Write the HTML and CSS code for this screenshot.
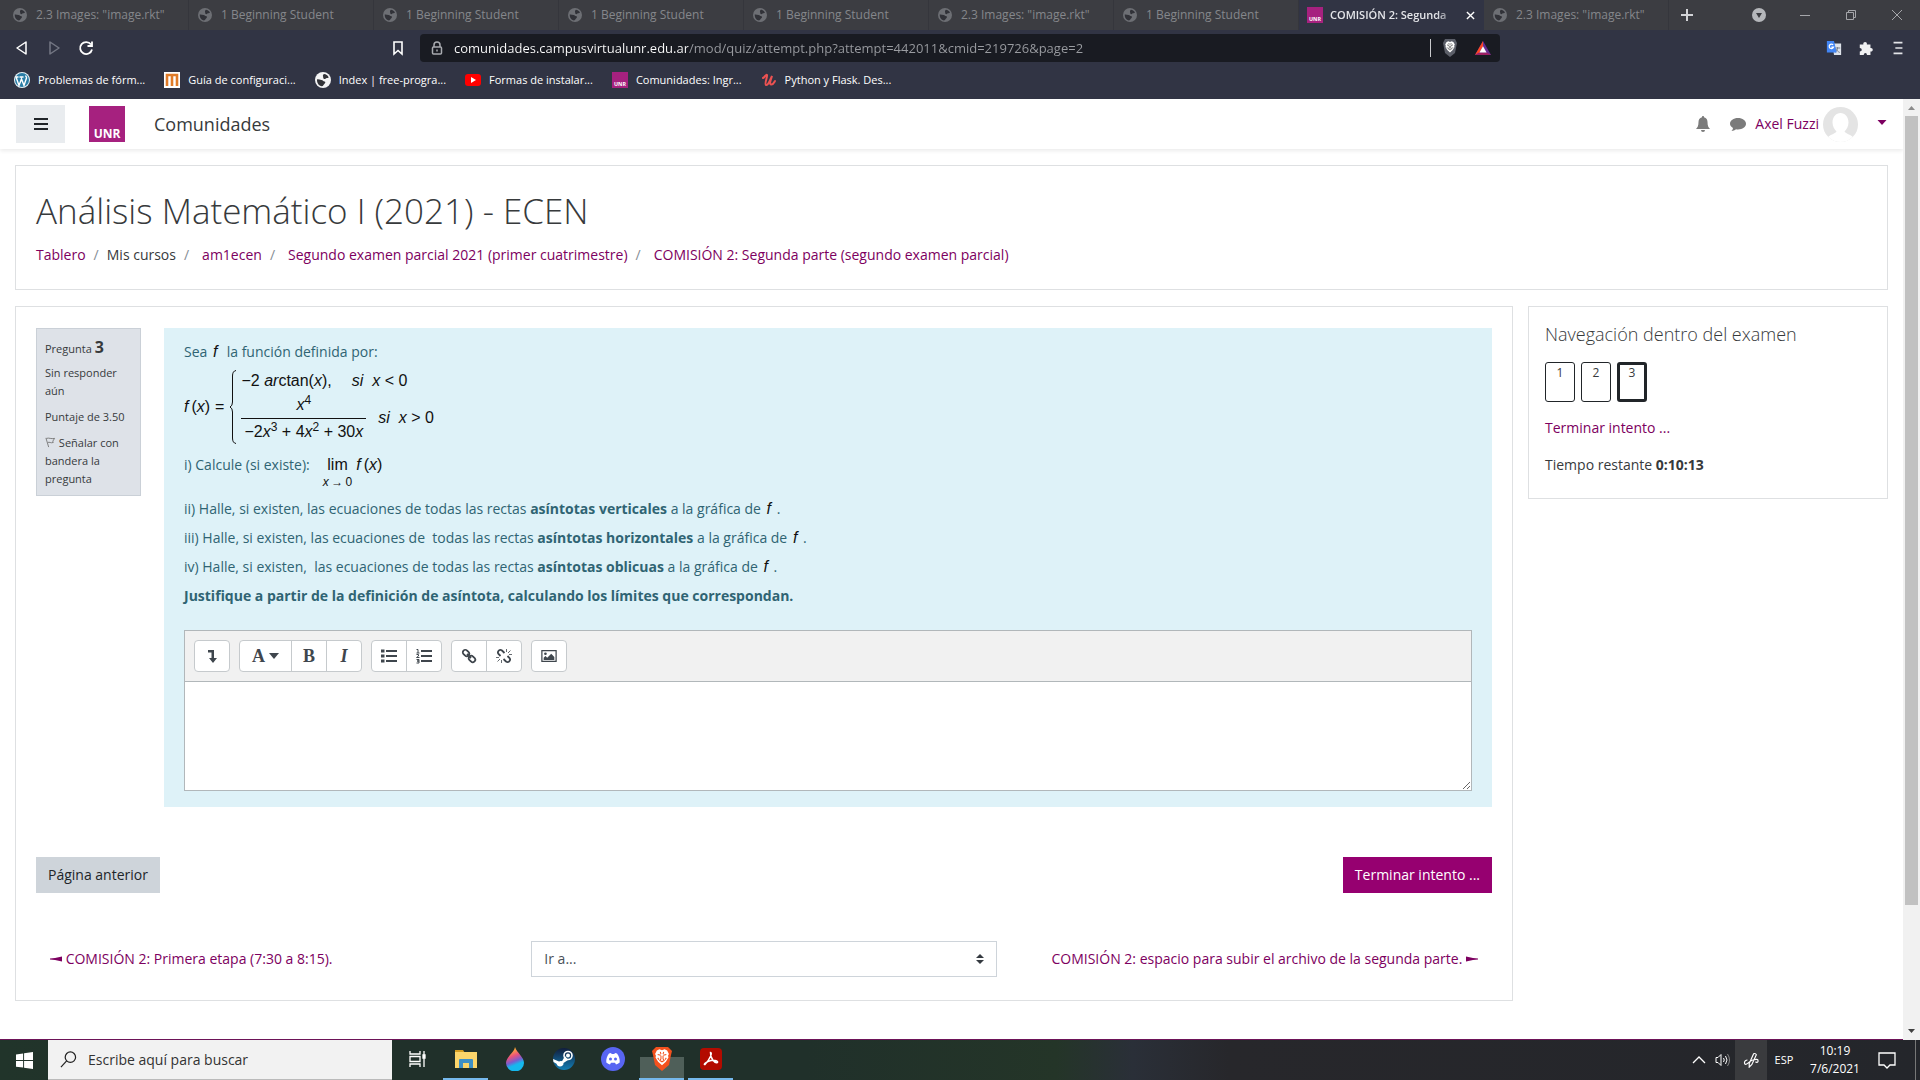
FILE: index.html
```html
<!DOCTYPE html>
<html lang="es">
<head>
<meta charset="utf-8">
<meta name="viewport" content="width=device-width, initial-scale=1">
<title>COMISIÓN 2: Segunda parte (segundo examen parcial)</title>
<link rel="stylesheet" href="styles.css">
</head>
<body>
<svg class="defs" aria-hidden="true">
  <symbol id="globe" viewBox="0 0 16 16"><circle cx="8" cy="8" r="8" fill="currentColor"/><path class="cut" d="M2 7.500c1.500-.5 3 .6 4.500.5 1.500 0 1.500 1.500 3 1.500 1.200 0 1 1.500 0 2.200-1 .8-1.200 2.300-2.600 2.500C3.800 14 1.800 11 2 7.500zM9 2c2 0 4 1.500 4.700 3.500-1.200.8-2.500.2-3.200 1.200-1 .8-2.500 0-2.300-1.200C8.500 4.500 7 3.500 9 2z"/></symbol>
  <symbol id="unr" viewBox="0 0 36 36"><path fill="#a6217f" d="M0 0h36v36H0z"/><text x="18" y="32" text-anchor="middle" font-family="Open Sans" font-size="12" font-weight="700" fill="#fff">UNR</text></symbol>
  <symbol id="lion" viewBox="0 0 20 22"><path fill="#fff" d="M4 3l3-1.500 3 1 3-1L16 3l2 4-1 2 .5 2-3 5-4.500 4-4.500-4-3-5L3 9 2 7z"/><path fill="none" stroke="var(--mane)" stroke-width="1.200" d="M5 7.500l3.500 1M15 7.500l-3.500 1M8 4.500l.8 2.500M12 4.500L11.200 7M8.800 9v3.500L7.500 14.500l2.500 1.500 2.500-1.500-1.300-2V9M5 11.500l1.500 2M15 11.500l-1.500 2"/></symbol>
</svg>

<header class="browser">
  <nav class="tabs" aria-label="Pestañas">
    <a class="tab" href="#"><svg><use href="#globe"/></svg><span>2.3 Images: "image.rkt"</span></a>
    <a class="tab" href="#"><svg><use href="#globe"/></svg><span>1 Beginning Student</span></a>
    <a class="tab" href="#"><svg><use href="#globe"/></svg><span>1 Beginning Student</span></a>
    <a class="tab" href="#"><svg><use href="#globe"/></svg><span>1 Beginning Student</span></a>
    <a class="tab" href="#"><svg><use href="#globe"/></svg><span>1 Beginning Student</span></a>
    <a class="tab" href="#"><svg><use href="#globe"/></svg><span>2.3 Images: "image.rkt"</span></a>
    <a class="tab" href="#"><svg><use href="#globe"/></svg><span>1 Beginning Student</span></a>
    <a class="tab tab-active" href="#"><svg><use href="#unr"/></svg><span>COMISIÓN 2: Segunda</span><svg class="tab-close" viewBox="0 0 10 10"><path d="M1 1l8 8M9 1L1 9" stroke="currentColor" stroke-width="1.500"/></svg></a>
    <a class="tab" href="#"><svg><use href="#globe"/></svg><span>2.3 Images: "image.rkt"</span></a>
    <button class="new-tab" aria-label="Nueva pestaña"><svg viewBox="0 0 12 12"><path d="M6 0v12M0 6h12" stroke="currentColor" stroke-width="2"/></svg></button>
    <div class="window-buttons">
      <button aria-label="Buscar pestañas"><svg viewBox="0 0 14 14"><circle cx="7" cy="7" r="7" fill="#b5b7bb"/><path d="M4 5h6L7 10z" fill="#3b3c41"/></svg></button>
      <button aria-label="Minimizar"><svg viewBox="0 0 14 14"><path d="M2 7.500h10" stroke="currentColor"/></svg></button>
      <button aria-label="Restaurar"><svg viewBox="0 0 14 14" fill="none" stroke="currentColor"><path d="M2.500 4.500h7v7h-7zM4.500 4.500v-2h7v7h-2"/></svg></button>
      <button aria-label="Cerrar"><svg viewBox="0 0 14 14"><path d="M2 2l10 10M12 2L2 12" stroke="currentColor"/></svg></button>
    </div>
  </nav>
  <div class="toolbar">
    <div class="nav-buttons">
      <button aria-label="Atrás"><svg viewBox="0 0 16 16"><path d="M12 2v12L3 8z" fill="none" stroke="#fff" stroke-width="1.500" stroke-linejoin="round"/></svg></button>
      <button aria-label="Adelante"><svg viewBox="0 0 16 16"><path d="M4 2v12l9-6z" fill="none" stroke="#747784" stroke-width="1.500" stroke-linejoin="round"/></svg></button>
      <button aria-label="Recargar"><svg viewBox="0 0 16 16"><path d="M13 4.500A6 6 0 1 0 14 9.500M14 1.500v4.500h-4.500" fill="none" stroke="#fff" stroke-width="1.800"/></svg></button>
    </div>
    <button class="bookmark" aria-label="Marcador"><svg viewBox="0 0 16 16"><path d="M4 2h8v12l-4-3.500L4 14z" fill="none" stroke="#fff" stroke-width="1.600"/></svg></button>
    <div class="address">
      <svg viewBox="0 0 14 14"><path d="M4 6V4a3 3 0 0 1 6 0v2" fill="none" stroke="#a9abb0" stroke-width="1.500"/><rect x="2.500" y="6" width="9" height="7" rx="1" fill="none" stroke="#a9abb0" stroke-width="1.500"/><path d="M7 8.500v2" stroke="#a9abb0" stroke-width="1.500"/></svg>
      <input aria-label="Dirección" value="comunidades.campusvirtualunr.edu.ar/mod/quiz/attempt.php?attempt=442011&amp;cmid=219726&amp;page=2">
      <button class="shield" aria-label="Escudos"><svg viewBox="0 0 16 18"><path d="M3 0h10l2 4-2 10-5 4-5-4L1 4z" fill="#5c5f69"/><use href="#lion" x="2" y="1" width="12" height="14"/></svg></button>
      <button aria-label="Recompensas"><svg viewBox="0 0 18 16"><path d="M9 0L0 16h18z" fill="#662d91"/><path d="M9 0L0 16l5-3 4-7z" fill="#ff4724"/><path d="M0 16h18l-5-3H5z" fill="#9e1f63"/><path d="M9 6l-4 7h8z" fill="#fff"/></svg></button>
    </div>
    <div class="extensions">
      <button aria-label="Traductor"><svg viewBox="0 0 18 18"><path fill="#dfe3ea" d="M7 4h10v13H9z"/><path d="M10 9h6M13 8v1c0 2-1 4-3 5M11 10c1 2 3 3.500 4.500 4" fill="none" stroke="#6d7787"/><path fill="#4285f4" d="M1 1h8l3 13H1z"/><path d="M8 5.500A2.500 2.500 0 1 0 8.500 8H6" fill="none" stroke="#fff" stroke-width="1.400"/></svg></button>
      <button aria-label="Extensiones"><svg viewBox="0 0 18 18"><path fill="#f1f1f3" d="M2 5h4c-.6-3.500 4.600-3.500 4 0h4v4c3.500-.6 3.500 4.600 0 4v4h-4c.4-3-3.600-3-3.500 0H2v-4c3-.2 3-3.800 0-4z"/></svg></button>
      <button aria-label="Menú"><svg viewBox="0 0 18 18"><path d="M4 3h10M6 9h8M4 15h10" stroke="#e3e4e8" stroke-width="1.800"/></svg></button>
    </div>
  </div>
  <nav class="bookmarks" aria-label="Marcadores">
    <a href="#"><svg viewBox="0 0 16 16"><circle cx="8" cy="8" r="8" fill="#e8f3f8"/><circle cx="8" cy="8" r="7" fill="#2a7da6"/><path d="M2 5l3 8.500L7.500 7 10 13.500 12.500 6c.2-1-.8-1.500-.8-2.500M1.500 5h3M5.500 5h4" fill="none" stroke="#fff" stroke-width="1.400"/></svg>Problemas de fórm...</a>
    <a href="#"><svg viewBox="0 0 16 16"><path fill="#fff" d="M0 0h16v16H0z"/><path d="M3 14V3h10v11M8 3v11" fill="none" stroke="#e07b28" stroke-width="2.600"/></svg>Guía de configuraci...</a>
    <a href="#"><svg><use href="#globe"/></svg>Index | free-progra...</a>
    <a href="#"><svg viewBox="0 0 16 16"><rect y="2" width="16" height="12" rx="3" fill="#f00"/><path d="M6 5l5 3-5 3z" fill="#fff"/></svg>Formas de instalar...</a>
    <a href="#"><svg><use href="#unr"/></svg>Comunidades: Ingr...</a>
    <a href="#"><svg viewBox="0 0 16 16"><path d="M2 6c2-1 3-4 4-3S3 12 5 13s4-5 6-9c-1 3-3 8-1 8.500s3-2 4-3.500" fill="none" stroke="#ec5252" stroke-width="2" stroke-linecap="round"/></svg>Python y Flask. Des...</a>
  </nav>
</header>

<div class="viewport">
  <div class="page">
    <header class="site-header">
      <button class="burger" aria-label="Panel lateral"><svg viewBox="0 0 16 16"><path d="M1 3h14M1 8h14M1 13h14" stroke="#212529" stroke-width="2"/></svg></button>
      <a class="brand" href="#" aria-label="UNR"><svg><use href="#unr"/></svg></a>
      <a class="site-name" href="#">Comunidades</a>
      <div class="user">
        <button aria-label="Notificaciones"><svg viewBox="0 0 16 16"><path fill="#7b7b7b" d="M8 0c.8 0 1 .5 1 1.200C11.500 1.700 12.500 4 12.500 6c0 4 1 5.500 2.500 7H1c1.500-1.500 2.500-3 2.500-7 0-2 1-4.300 3.500-4.800C7 .5 7.200 0 8 0zM6 14h4a2 2 0 0 1-4 0z"/></svg></button>
        <button aria-label="Mensajes"><svg viewBox="0 0 16 16"><path fill="#7b7b7b" d="M8 2c4.500 0 8 2.500 8 5.800s-3.500 5.700-8 5.700c-.7 0-1.300 0-2-.2-1.300 1-2.800 1.700-4.500 1.700C2.500 14 3 13 3 12 1 11 0 9.500 0 7.800 0 4.500 3.500 2 8 2z"/></svg></button>
        <a class="user-name" href="#">Axel Fuzzi <svg viewBox="0 0 35 35"><clipPath id="round"><circle cx="17.500" cy="17.500" r="17.500"/></clipPath><g clip-path="url(#round)"><path fill="#e4e4e4" d="M0 0h35v35H0z"/><path fill="#fff" d="M17.500 6c4.500 0 8 4 8 9.500 0 4-2 7-4 9 1 2 6 3 9 6v5h-26v-5c3-3 8-4 9-6-2-2-4-5-4-9C9.500 10 13 6 17.500 6z"/></g></svg></a>
        <button aria-label="Menú de usuario"><svg viewBox="0 0 16 16"><path fill="#7d0060" d="M3.500 4h9L8 9z"/></svg></button>
      </div>
    </header>

    <main>
      <section class="card course">
        <h1>Análisis Matemático I (2021) - ECEN</h1>
        <ol class="breadcrumb">
          <li><a href="#">Tablero</a></li>
          <li>Mis cursos</li>
          <li class="wide"><a href="#">am1ecen</a></li>
          <li class="wide"><a href="#">Segundo examen parcial 2021 (primer cuatrimestre)</a></li>
          <li class="wide"><a href="#">COMISIÓN 2: Segunda parte (segundo examen parcial)</a></li>
        </ol>
      </section>

      <div class="columns">
        <section class="card quiz">
          <div class="question">
            <aside class="info">
              <h3>Pregunta <b>3</b></h3>
              <p>Sin responder aún</p>
              <p>Puntaje de 3.50</p>
              <p><a href="#"><svg viewBox="0 0 12 12"><path d="M1 1l3 10M1.500 1.500c3-1 5 1 9 0l-2 3 .5 1.500C6 7 5 5 3 6" fill="none" stroke="#777"/></svg> Señalar con bandera la pregunta</a></p>
            </aside>
            <div class="content">
              <p>Sea <i class="m">f</i>&nbsp; la función definida por:</p>
              <div class="formula m">
                <span><i class="fn">f</i>(<i>x</i>)<span class="eq">=</span></span>
                <svg class="brace" viewBox="0 0 8 74" preserveAspectRatio="none"><path d="M7 .5Q3.500 1 3.500 6v26q0 4-2.500 5 2.500 1 2.500 5v26q0 5 3.500 5.500" fill="none" stroke="#111"/></svg>
                <div class="cases">
                  <div class="case"><span>−2 <i>ar</i>ctan(<i>x</i>),</span><span class="cond"><i>si</i>&nbsp; <i>x</i> &lt; 0</span></div>
                  <div class="case">
                    <div class="frac"><span><i>x</i><sup>4</sup></span><span>−2<i>x</i><sup>3</sup> + 4<i>x</i><sup>2</sup> + 30<i>x</i></span></div>
                    <span><i>si</i>&nbsp; <i>x</i> &gt; 0</span>
                  </div>
                </div>
              </div>
              <div class="limit">i) Calcule (si existe): <span class="lim m">lim<small><i>x</i>&thinsp;→&thinsp;0</small></span><span class="m"><i class="fn">f</i>(<i>x</i>)</span></div>
              <p>ii) Halle, si existen, las ecuaciones de todas las rectas <strong>asíntotas verticales</strong> a la gráfica de <i class="m">f</i> .</p>
              <p>iii) Halle, si existen, las ecuaciones de&nbsp; todas las rectas <strong>asíntotas horizontales</strong> a la gráfica de <i class="m">f</i> .</p>
              <p>iv) Halle, si existen,&nbsp; las ecuaciones de todas las rectas <strong>asíntotas oblicuas</strong> a la gráfica de <i class="m">f</i> .</p>
              <p><strong>Justifique a partir de la definición de asíntota, calculando los límites que correspondan.</strong></p>

              <div class="editor">
                <div class="editor-bar">
                  <div class="group"><button aria-label="Mostrar más botones"><svg viewBox="0 0 16 16"><path fill="#3f464d" d="M4 2h6v8h3l-4 5-4-5h2.500V4.500H4z"/></svg></button></div>
                  <div class="group"><button class="styles" aria-label="Estilos"><b>A</b><svg class="caret" viewBox="0 0 10 6"><path fill="#3f464d" d="M0 0h10L5 6z"/></svg></button><button aria-label="Negrita"><b>B</b></button><button aria-label="Cursiva"><b><i>I</i></b></button></div>
                  <div class="group"><button aria-label="Lista"><svg viewBox="0 0 16 16"><path d="M5 3h11M5 8h11M5 13h11" stroke="#3f464d" stroke-width="2"/><path d="M0 3h3.500M0 8h3.500M0 13h3.500" stroke="#3f464d" stroke-width="3"/></svg></button><button aria-label="Lista numerada"><svg viewBox="0 0 16 16"><path d="M5 3h11M5 8h11M5 13h11" stroke="#3f464d" stroke-width="2"/><path d="M.5 1.500H2V5M.5 5h3M.5 6.500h2v1.500l-2 1.500h3M.5 11.500h2.500v1.500H1h2v2H.5" fill="none" stroke="#3f464d"/></svg></button></div>
                  <div class="group"><button aria-label="Enlace"><svg viewBox="0 0 16 16" fill="none" stroke="#3f464d" stroke-width="1.800"><rect x="1.500" y="2.500" width="7" height="5" rx="2.500" transform="rotate(45 5 5)"/><rect x="7.500" y="8.500" width="7" height="5" rx="2.500" transform="rotate(45 11 11)"/><path d="M6 6l4 4"/></svg></button><button aria-label="Quitar enlace"><svg viewBox="0 0 16 16" fill="none" stroke="#3f464d"><path stroke-width="1.800" d="M4.500 8L2.500 6A2.500 2.500 0 0 1 6 2.500l2.500 2.500M7.500 11l2.500 2.500a2.500 2.500 0 0 0 3.500-3.500l-2-2"/><path stroke-width=".8" d="M10.500 4V1M12 5l2.500-2.500M13 6.500h3M5.500 12v3M4 11l-2.500 2.500M3 9.500H0"/></svg></button></div>
                  <div class="group"><button aria-label="Imagen"><svg viewBox="0 0 18 16"><path d="M1 2h16v12H1z" fill="none" stroke="#3f464d" stroke-width="1.400"/><circle cx="5" cy="5.500" r="1.500" fill="#3f464d"/><path fill="#3f464d" d="M3 12.500V10l2-2 2 2 4.500-4.500L15 9v3.500z"/></svg></button></div>
                </div>
                <textarea aria-label="Respuesta"></textarea>
              </div>
            </div>
          </div>
          <div class="actions"><button class="secondary">Página anterior</button><button class="primary">Terminar intento ...</button></div>
          <nav class="activity-nav">
            <a href="#"><svg viewBox="0 0 12 6"><path fill="currentColor" d="M0 2.500L5 2l7-1.500v5L5 4 0 3.500z"/></svg> COMISIÓN 2: Primera etapa (7:30 a 8:15).</a>
            <div class="jump">
              <select aria-label="Ir a"><option>Ir a...</option></select>
            </div>
            <a class="next" href="#">COMISIÓN 2: espacio para subir el archivo de la segunda parte. <svg viewBox="0 0 12 6"><path fill="currentColor" d="M12 2.500L7 2 0 .5v5L7 4l5-.5z"/></svg></a>
          </nav>
        </section>

        <aside class="card quiz-nav">
          <h2>Navegación dentro del examen</h2>
          <div class="numbers"><a href="#">1</a><a href="#">2</a><a class="current" href="#">3</a></div>
          <p><a href="#">Terminar intento ...</a></p>
          <p>Tiempo restante <b>0:10:13</b></p>
        </aside>
      </div>
    </main>
  </div>
  <div class="scrollbar" aria-hidden="true">
    <svg viewBox="0 0 17 17"><path fill="#8b8b8b" d="M5 11h7l-3.500-4z"/></svg>
    <div class="track"><div class="thumb"></div></div>
    <svg viewBox="0 0 17 17"><path fill="#404040" d="M5 6h7l-3.500 4z"/></svg>
  </div>
</div>

<footer class="taskbar">
  <button class="start" aria-label="Inicio"><svg viewBox="0 0 16 16"><path fill="#fff" d="M0 2.300L6.700 1.300v6.200H0zM7.600 1.200L16 0v7.500H7.600zM0 8.400h6.700v6.300L0 13.800zM7.600 8.400H16V16l-8.400-1.200z"/></svg></button>
  <label class="search"><svg viewBox="0 0 18 18"><circle cx="11" cy="6.500" r="5.500" fill="none" stroke="#222" stroke-width="1.300"/><path d="M7 10.500L1 17" stroke="#222" stroke-width="1.300"/></svg><input aria-label="Buscar" placeholder="Escribe aquí para buscar"></label>
  <div class="apps">
    <button aria-label="Vista de tareas"><svg viewBox="0 0 24 24" fill="none" stroke="#fff" stroke-width="1.300"><path d="M5 4v3h10V4M5 20v-3h10v3M5 9.500h10v5H5zM19 4v16"/><path fill="#fff" d="M18 8h2v3h-2z"/></svg></button>
    <button class="open" aria-label="Explorador"><svg viewBox="0 0 24 24"><path fill="#d59e22" d="M1 3h8l2 3H1z"/><path fill="#fbd56b" d="M1 5h22v16H1z"/><path fill="#3d8fc6" d="M5 21v-8q0-1 1-1h12q1 0 1 1v8h-4v-5H9v5z"/></svg></button>
    <button aria-label="Pintura"><svg viewBox="0 0 24 24"><defs><linearGradient id="drop" x1="0" y1="0" x2=".3" y2="1"><stop offset="0" stop-color="#ffd400"/><stop offset=".25" stop-color="#fb9846"/><stop offset=".45" stop-color="#e9527c"/><stop offset=".66" stop-color="#7a5ccf"/><stop offset=".82" stop-color="#15b8ee"/></linearGradient></defs><path fill="url(#drop)" d="M12 0c2 6 9 10 9 16a8.500 8 0 0 1-18 0C3 10 11 6 12 0z"/></svg></button>
    <button aria-label="Steam"><svg viewBox="0 0 24 24"><defs><linearGradient id="st" x1="0" y1="0" x2="0" y2="1"><stop stop-color="#111d3c"/><stop offset="1" stop-color="#137eb5"/></linearGradient></defs><circle cx="12" cy="12" r="11" fill="url(#st)"/><circle cx="16" cy="8.500" r="4" fill="none" stroke="#fff" stroke-width="1.600"/><circle cx="16" cy="8.500" r="2" fill="#fff"/><path fill="#fff" d="M1 12l6 2.500c1-.6 2-.7 3-.3L13 9l3 4-4.500 3c.3 2-1.500 3.500-3.500 3.500-1.800 0-3-1.200-3.500-2.800L1.500 15z"/></svg></button>
    <button aria-label="Discord"><svg viewBox="0 0 24 24"><circle cx="12" cy="12" r="12" fill="#5865f2"/><path fill="#fff" d="M8 6.500l2-.5.700 1h2.600l.7-1 2 .5c2 2.500 3 5.500 2.700 9-1.200 1-2.400 1.600-3.700 2l-1-1.700h-4l-1 1.700c-1.300-.4-2.500-1-3.700-2C5 12 6 9 8 6.500z"/><circle cx="9.500" cy="12" r="1.500" fill="#5865f2"/><circle cx="14.500" cy="12" r="1.500" fill="#5865f2"/></svg></button>
    <button class="open current" aria-label="Brave"><svg viewBox="0 0 24 24"><path fill="#f4511e" d="M6 0h12l4 4-1 4-2 10-7 6-7-6L3 8 2 4z"/><use href="#lion" x="3" y="1" width="18" height="19"/></svg></button>
    <button class="open" aria-label="Acrobat"><svg viewBox="0 0 24 24"><rect x="1" y="1" width="22" height="22" rx="4" fill="#b30b00"/><path d="M11.500 5.500c2 0 0 6-5.500 12-2 .5 1-3 6-4s8 1.500 6 2.200-7-4.500-6.500-10.200z" fill="none" stroke="#fff" stroke-width="1.500"/></svg></button>
  </div>
  <div class="tray">
    <button aria-label="Iconos ocultos"><svg viewBox="0 0 16 16"><path d="M2 11l6-6 6 6" fill="none" stroke="#fff" stroke-width="1.300"/></svg></button>
    <button aria-label="Volumen"><svg viewBox="0 0 16 16" fill="none" stroke="#fff"><path d="M1 5.500h2l3-3v11l-3-3H1zM8.500 6q1.500 2 0 4M10.500 4q3 4 0 8"/><path stroke="#888" d="M12.500 2q4 6 0 12"/></svg></button>
    <button class="pen" aria-label="Windows Ink"><svg viewBox="0 0 18 18" fill="none" stroke="#fff" stroke-width="1.300"><path d="M7 13l5-11q2-1 3 1L10 14l-3 3zM5 9c-4 0-4 5-2 5s4-4 8-5 6-1 6 1-2 2-3 1"/></svg></button>
    <button class="lang">ESP</button>
    <button class="clock"><time>10:19</time><span>7/6/2021</span></button>
    <button class="notice" aria-label="Notificaciones"><svg viewBox="0 0 18 18"><path d="M1 2h16v12h-5l-3 3-3-3H1z" fill="none" stroke="#fff" stroke-width="1.300"/></svg></button>
  </div>
</footer>
</body>
</html>
```

FILE: styles.css
```css
* { box-sizing: border-box; }
body {
  margin: 0;
  min-height: 100vh;
  display: flex;
  flex-direction: column;
  font: 14px/22px "Open Sans", "Noto Sans", sans-serif;
  color: #373a3c;
  background: #fff;
}
button { border: 0; padding: 0; background: none; color: inherit; font: inherit; display: flex; align-items: center; justify-content: center; }
a { color: #7d0060; text-decoration: none; }
svg { flex: none; }
h1, h2, h3, p, ol { margin: 0; padding: 0; font-weight: inherit; }
.defs { position: absolute; width: 0; height: 0; }

/* Browser frame */
.browser { background: #313444; color: #fff; }
.tabs { display: flex; height: 30px; padding-left: 4px; background: #3c3d42; color: #8e9094; }
.tab { flex: 0 1 185px; min-width: 0; display: flex; align-items: center; gap: 9px; padding: 0 9px; border-right: 1px solid #35363c; color: #85878b; font-size: 12px; white-space: nowrap; }
.tab svg { width: 14px; height: 14px; color: #6d6f74; }
.tab span { flex: 1; overflow: hidden; }
.cut { fill: #313238; }
.tab-active { gap: 7px; padding: 0 6px 0 8px; background: #313444; color: #e4e5e9; font-size: 11px; font-weight: 600; border: 0; }
.tab-active > svg:first-child { width: 16px; height: 16px; }
.tab-active span { -webkit-mask-image: linear-gradient(90deg, #000 85%, transparent); mask-image: linear-gradient(90deg, #000 85%, transparent); }
.tab .tab-close { width: 9px; height: 9px; color: #fff; margin: 0 3px; }
.new-tab { width: 36px; color: #d3d4d7; }
.new-tab svg { width: 12px; height: 12px; }
.window-buttons { margin-left: auto; display: flex; color: #a5a6aa; }
.window-buttons button { width: 46px; }
.window-buttons svg { width: 14px; height: 14px; }

.toolbar { display: flex; align-items: center; height: 36px; padding: 0 14px; }
.nav-buttons { display: flex; gap: 16px; width: 376px; }
.toolbar button svg { width: 16px; height: 16px; }
.address { flex: 0 1 1080px; min-width: 0; margin-left: 14px; height: 28px; display: flex; align-items: center; gap: 10px; padding: 0 9px 0 10px; background: #191b22; border-radius: 4px; }
.address > svg { width: 14px; height: 14px; }
.address input {
  flex: 1; min-width: 0; border: 0; padding: 0; outline: 0; font: 13px/20px "Open Sans", "Noto Sans", sans-serif;
  color: transparent;
  background: linear-gradient(90deg, #fff 234px, #9a9ca1 234px);
  -webkit-background-clip: text; background-clip: text;
}
.address .shield { border-left: 1px solid #c9cacd; padding-left: 10px; height: 18px; margin-right: 6px; --mane: #444; }
.toolbar .shield svg { width: 18px; height: 18px; }
.extensions { margin-left: auto; display: flex; gap: 16px; }

.bookmarks { display: flex; gap: 19px; height: 33px; align-items: center; padding: 0 14px 6px; font-size: 11px; white-space: nowrap; }
.bookmarks a { display: flex; align-items: center; gap: 8px; color: #fff; }
.bookmarks svg { width: 16px; height: 16px; color: #f3f3f5; }

/* Site */
.viewport { flex: 1; display: flex; }
.page { flex: 1; min-width: 0; border-bottom: 1px solid #6d1358; }
.site-header { display: flex; align-items: center; height: 50px; padding: 0 4px 0 16px; box-shadow: 0 2px 4px #00000014; }
.burger { width: 49px; height: 38px; background: #e9ecef; }
.burger svg { width: 16px; height: 16px; }
.brand { margin-left: 24px; height: 36px; }
.brand svg { width: 36px; height: 36px; }
.site-name { margin-left: 29px; font-size: 18px; color: #373a3c; }
.user { margin-left: auto; display: flex; align-items: center; }
.user svg { width: 16px; height: 16px; }
.user button { width: 35px; height: 35px; }
.user-name { display: flex; align-items: center; gap: 4px; margin-right: 6px; }
.user .user-name svg { width: 35px; height: 35px; }

main { padding: 16px 15px 37px; }
.card { border: 1px solid #dee0e2; background: #fff; }
.course { padding: 20px 20px 23px; margin-bottom: 16px; }
h1 { font-size: 35px; line-height: 50px; font-weight: 300; }
.breadcrumb { display: flex; flex-wrap: wrap; list-style: none; padding: 8px 0 0; }
.breadcrumb li + li::before { content: "/"; color: #868e96; padding: 0 8px; }
.breadcrumb li.wide::before { padding-right: 13px; }
.columns { display: flex; align-items: flex-start; gap: 15px; }
.quiz { flex: 1; min-width: 0; padding: 21px 20px 23px; }
.question { display: flex; align-items: flex-start; gap: 23px; }
.info { flex: none; width: 105px; padding: 7px 8px; border: 1px solid #cad0d7; background: #dee2e8; font-size: 11px; line-height: 18px; }
.info h3 { font-size: 11px; line-height: 22px; }
.info h3 b { font-size: 16px; }
.info p { margin-top: 8px; }
.info h3 + p { margin-top: 4px; }
.info a { color: #373a3c; }
.info svg { width: 11px; height: 11px; vertical-align: -1px; }

.content { flex: 1; min-width: 0; padding: 13px 20px 16px; background: #def2f8; color: #2f6473; }
.content p { margin-bottom: 7px; }
.m { font-family: "Liberation Sans", Arial, sans-serif; font-size: 16px; color: #111; }
i.m { line-height: 20px; margin: 0 2px; }
.fn { margin-right: 3px; }
.formula { display: flex; align-items: center; height: 74px; white-space: nowrap; }
.eq { margin: 0 5px; }
.brace { width: 8px; height: 74px; margin-right: 4px; }
.case { display: flex; align-items: center; gap: 12px; }
.cond { margin-left: 8px; }
.frac { display: flex; flex-direction: column; align-items: center; line-height: 26px; }
.frac span + span { border-top: 1px solid #111; padding: 0 3px; }
sup { font-size: 12px; line-height: 0; vertical-align: 6px; }
.limit { display: flex; align-items: flex-start; padding: 10px 0; }
.lim { display: flex; flex-direction: column; align-items: center; margin: 0 4px 0 13px; }
.lim small { font-size: 12px; line-height: 12px; }

.editor { margin-top: 23px; border: 1px solid #b1b7ba; background: #fff; }
.editor-bar { display: flex; flex-wrap: wrap; gap: 9px; padding: 9px; background: #f1f1f1; border-bottom: 1px solid #b1b7ba; }
.group { display: flex; border: 1px solid #c6cacd; border-radius: 4px; background: #fff; overflow: hidden; }
.group button { width: 34px; height: 30px; color: #3f464d; font: 18px/24px "Liberation Serif", serif; }
.group button + button { width: 35px; border-left: 1px solid #c6cacd; }
.group .styles { width: 51px; gap: 4px; }
.group svg { width: 16px; height: 16px; }
.group .caret { width: 10px; height: 6px; }
textarea { display: block; width: 100%; height: 108px; border: 0; outline: 0; resize: vertical; }

.actions { display: flex; justify-content: space-between; margin-top: 50px; }
.actions button { height: 36px; padding: 0 12px; }
.secondary { background: #ced4da; color: #212529; }
.primary { background: #960070; color: #fff; }
.activity-nav { display: grid; grid-template-columns: repeat(3, 1fr); align-items: center; margin-top: 48px; }
.activity-nav > a { padding: 0 14px; white-space: nowrap; }
.activity-nav svg { width: 12px; height: 6px; vertical-align: 2px; }
.activity-nav .next { text-align: right; }
.jump { padding: 0 10px; }
select {
  appearance: none; width: 100%; height: 36px; border: 1px solid #ced4da; border-radius: 0; padding: 0 12px; font: inherit; color: #495057;
  background: url("data:image/svg+xml,%3Csvg xmlns='http://www.w3.org/2000/svg' viewBox='0 0 4 5'%3E%3Cpath fill='%23343a40' d='M2 0L0 2h4zm0 5L0 3h4z'/%3E%3C/svg%3E") no-repeat right 12px center / 8px 10px #fff;
}

.quiz-nav { flex: none; width: 360px; padding: 15px 16px 22px; }
.quiz-nav h2 { font-size: 18px; line-height: 24px; font-weight: 300; }
.numbers { display: flex; gap: 6px; margin: 16px 0 15px; }
.numbers a { width: 30px; height: 40px; border: 1px solid #212529; border-radius: 3px; font-size: 12px; line-height: 20px; text-align: center; color: #373a3c; }
.numbers .current { border-width: 3px; line-height: 16px; }
.quiz-nav p + p { margin-top: 15px; }

.scrollbar { flex: none; width: 17px; display: flex; flex-direction: column; background: #f1f1f1; }
.scrollbar svg { width: 17px; height: 17px; }
.track { flex: 1; padding: 0 2px; }
.thumb { height: 87%; background: #c1c1c1; }

/* Windows task bar */
.taskbar { display: flex; height: 40px; color: #fff; background: linear-gradient(90deg, #21342a 0, #20302a 20%, #20302a 42%, #243528 55%, #2a2f38 59%, #27272b 64%, #24262b 100%); }
.start { width: 48px; }
.start svg { width: 17px; height: 17px; }
.search { flex: 0 1 344px; display: flex; align-items: center; gap: 11px; padding: 0 12px; background: #f2f2f2; border-bottom: 1px solid #bbb; }
.search svg { width: 17px; height: 17px; }
.search input { flex: 1; min-width: 0; border: 0; padding: 0; background: none; font: 14px/20px "Open Sans", "Noto Sans", sans-serif; }
.search input::placeholder { color: #333; }
.apps { display: flex; }
.apps button { width: 49px; border-bottom: 2px solid transparent; }
.apps svg { width: 24px; height: 24px; }
.apps .open { border-image: linear-gradient(90deg, transparent 4px, #76b9ed 4px, #76b9ed 45px, transparent 45px) 2; border-style: solid; border-width: 0 0 2px; }
.apps .current { background: linear-gradient(transparent 17px, #4f5f59 17px) center / 44px 100% no-repeat; --mane: #f4511e; }
.tray { margin-left: auto; display: flex; font-size: 12px; line-height: 18px; border-right: 1px solid #777; margin-right: 4px; }
.tray svg { width: 16px; height: 16px; }
.tray button { width: 24px; }
.tray .pen { width: 32px; background: #3a3b3e; }
.tray .lang { width: 34px; font-size: 11px; }
.tray .clock { width: 68px; flex-direction: column; }
.tray .notice { width: 36px; margin-right: 10px; }
.notice svg { width: 18px; height: 18px; }
```
